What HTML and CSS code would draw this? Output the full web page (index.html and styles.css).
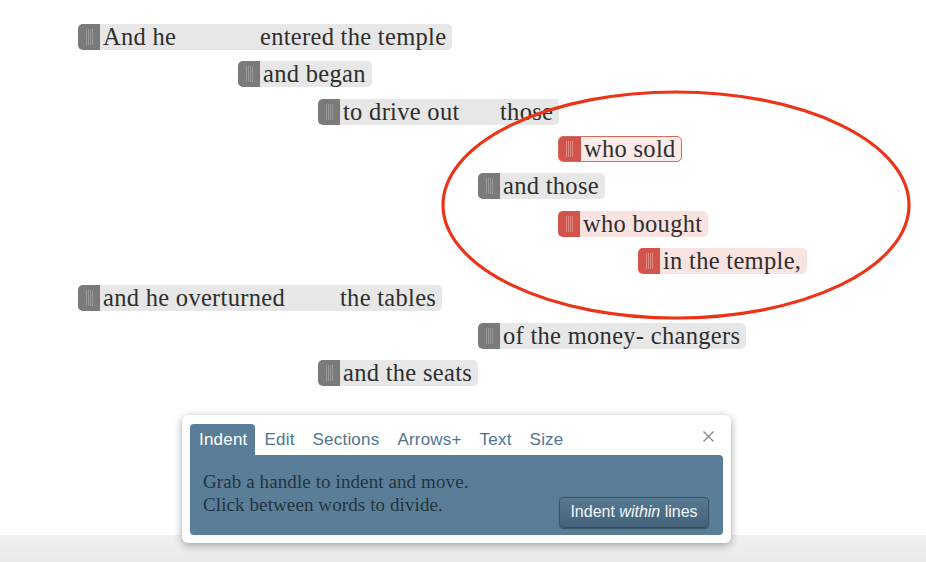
FILE: index.html
```html
<!DOCTYPE html>
<html>
<head>
<meta charset="utf-8">
<link rel="stylesheet" href="styles.css">
</head>
<body>
<div class="page">
  <div class="lines">
    <div class="line l0"><div class="box"><span class="handle"></span><span class="seg w2">And he</span><span class="seg next">entered the temple</span></div></div>
    <div class="line l2"><div class="box"><span class="handle"></span><span class="seg">and began</span></div></div>
    <div class="line l3"><div class="box"><span class="handle"></span><span class="seg w2">to drive out</span><span class="seg next">those</span></div></div>
    <div class="line l6"><div class="box red selected"><span class="handle"></span><span class="seg">who sold</span></div></div>
    <div class="line l5"><div class="box"><span class="handle"></span><span class="seg">and those</span></div></div>
    <div class="line l6"><div class="box red"><span class="handle"></span><span class="seg">who bought</span></div></div>
    <div class="line l7"><div class="box red"><span class="handle"></span><span class="seg">in the temple,</span></div></div>
    <div class="line l0"><div class="box"><span class="handle"></span><span class="seg w3">and he overturned</span><span class="seg next">the tables</span></div></div>
    <div class="line l5"><div class="box"><span class="handle"></span><span class="seg">of the money- changers</span></div></div>
    <div class="line l3"><div class="box"><span class="handle"></span><span class="seg">and the seats</span></div></div>
  </div>

  <div class="toolbar">
    <div class="tabs">
      <span class="tab active">Indent</span>
      <span class="tab">Edit</span>
      <span class="tab">Sections</span>
      <span class="tab">Arrows+</span>
      <span class="tab">Text</span>
      <span class="tab">Size</span>
      <svg class="close" width="13" height="13" viewBox="0 0 13 13"><path d="M1.5 1.5 L11.5 11.5 M11.5 1.5 L1.5 11.5" stroke="#8a8a8a" stroke-width="1.4" fill="none"/></svg>
    </div>
    <div class="panel">
      <div class="help">
        <div>Grab a handle to indent and move.</div>
        <div>Click between words to divide.</div>
      </div>
      <button class="btn">Indent <em>within</em> lines</button>
    </div>
  </div>

  <svg class="circle" width="926" height="562" viewBox="0 0 926 562">
    <ellipse cx="676" cy="205" rx="233" ry="113" fill="none" stroke="#ec3419" stroke-width="3.2"/>
  </svg>
</div>
</body>
</html>
```

FILE: styles.css
```css
html, body {
  margin: 0;
  padding: 0;
}
body {
  width: 926px;
  height: 562px;
  overflow: hidden;
  background: linear-gradient(to bottom, #ffffff 0, #ffffff 535px, #f1f1f1 535px, #e9e9e9 562px);
}
.page {
  position: relative;
  width: 926px;
  height: 562px;
}
.lines {
  padding: 24px 0 0 78px;
  display: flex;
  flex-direction: column;
  gap: 11.33px;
}
.line {
  height: 26px;
  display: flex;
}
.l2 { padding-left: 160px; }
.l3 { padding-left: 240px; }
.l5 { padding-left: 400px; }
.l6 { padding-left: 480px; }
.l7 { padding-left: 560px; }

.box {
  display: flex;
  height: 26px;
  box-sizing: border-box;
  background: #e7e7e7;
  border-radius: 5px;
  font-family: "Liberation Serif", "Times New Roman", serif;
  font-size: 24.5px;
  letter-spacing: 0.3px;
  color: #2e2e2e;
  line-height: 26px;
}
.handle {
  position: relative;
  width: 22px;
  flex: none;
  background: #7a7a7a;
  border-radius: 5px 0 0 5px;
}
.handle::after {
  content: "";
  position: absolute;
  left: 8px;
  top: 5px;
  width: 7px;
  height: 16px;
  background: repeating-linear-gradient(to right, #999999 0, #999999 1px, transparent 1px, transparent 2px);
}
.seg {
  padding: 0 6px 0 3px;
  white-space: nowrap;
}
.seg.w2 { width: 160px; box-sizing: border-box; padding-right: 0; }
.seg.w3 { width: 240px; box-sizing: border-box; padding-right: 0; }
.seg.next { padding-left: 0; }

.box.red { background: #f9e3e1; }
.box.red .handle { background: #d1534a; }
.box.red .handle::after {
  background: repeating-linear-gradient(to right, #e28780 0, #e28780 1px, transparent 1px, transparent 2px);
}
.box.selected {
  background: #fcebe9;
  border: 1px solid #d36a60;
  line-height: 24px;
}
.box.selected .handle { border-radius: 4px 0 0 4px; }
.box.selected .handle::after { left: 7px; top: 4px; }
.box.selected .seg { padding-right: 5px; }

.circle {
  position: absolute;
  left: 0;
  top: 0;
  pointer-events: none;
}

.toolbar {
  margin: 29px 0 0 182px;
  width: 549px;
  box-sizing: border-box;
  padding: 9px 8px 8px;
  background: #fff;
  border-radius: 6px;
  box-shadow: 0 2px 9px rgba(0, 0, 0, 0.35);
  font-family: "Liberation Sans", Arial, sans-serif;
}
.tabs {
  display: flex;
  align-items: center;
  height: 31px;
}
.tab {
  height: 31px;
  line-height: 32px;
  padding: 0 9px;
  font-size: 17px;
  letter-spacing: 0.2px;
  color: #4f7592;
}
.tab.active {
  background: #5a7e97;
  color: #fff;
  border-radius: 4px 4px 0 0;
  padding: 0 8px 0 9px;
}
.close {
  margin-left: auto;
  margin-right: 8px;
  margin-top: -5px;
}
.panel {
  height: 80px;
  box-sizing: border-box;
  background: #5a7e97;
  border-radius: 0 4px 4px 4px;
  display: flex;
  justify-content: space-between;
  align-items: flex-end;
  padding: 15px 14px 7px 13px;
}
.help {
  align-self: flex-start;
  font-family: "Liberation Serif", "Times New Roman", serif;
  font-size: 19px;
  letter-spacing: 0.1px;
  line-height: 23px;
  color: #25333f;
}
.btn {
  height: 31px;
  width: 150px;
  padding: 0;
  border: 1px solid #3a5467;
  border-radius: 4px;
  background: linear-gradient(to bottom, #587a91, #43627a);
  box-shadow: 0 1px 1px rgba(0, 0, 0, 0.35);
  color: #f2f5f8;
  font-family: "Liberation Sans", Arial, sans-serif;
  font-size: 16px;
}
.btn em { font-style: italic; }
```
